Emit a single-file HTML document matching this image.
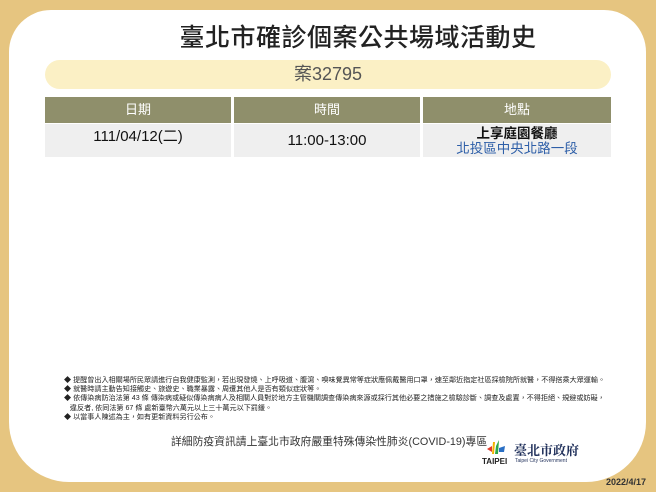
<!DOCTYPE html>
<html><head><meta charset="utf-8"><style>
*{margin:0;padding:0;box-sizing:border-box}
body{width:656px;height:492px;background:#e6c580;position:relative;overflow:hidden;font-family:"Liberation Sans","Noto Sans CJK TC",sans-serif}
.card{position:absolute;left:9px;top:10px;width:637px;height:472px;background:#fff;border-radius:42px 42px 60px 60px}
.title{position:absolute;left:0;width:656px;top:18px;text-align:center;font-size:25px;font-weight:500;color:#222;padding-left:60px;letter-spacing:0.5px}
.pill{position:absolute;left:45px;top:60px;width:566px;height:29px;border-radius:15px;background:#fbf0c5;text-align:center;font-size:18px;line-height:29px;color:#555}
.th{position:absolute;top:97px;height:26px;background:#8f8f6b;color:#fff;font-size:13px;text-align:center;line-height:26px}
.td{position:absolute;top:124px;height:33px;background:#efefef;color:#111;text-align:center}
.notes{position:absolute;left:64px;top:376px;font-size:7.1px;line-height:9.2px;color:#222;white-space:nowrap}
.foot{position:absolute;left:171px;top:433px;font-size:10.8px;color:#333}
.date{position:absolute;right:10px;top:477px;font-size:9px;font-weight:bold;color:#333}
</style></head><body>
<div class="card"></div>
<div class="title">臺北市確診個案公共場域活動史</div>
<div class="pill">案32795</div>
<div class="th" style="left:45px;width:186px">日期</div>
<div class="th" style="left:234px;width:186px">時間</div>
<div class="th" style="left:423px;width:188px">地點</div>
<div class="td" style="left:45px;width:186px;font-size:15px;line-height:26px">111/04/12(二)</div>
<div class="td" style="left:234px;width:186px;font-size:15px;line-height:34px">11:00-13:00</div>
<div class="td" style="left:423px;width:188px;font-size:13.5px;line-height:15px;padding-top:2px"><b>上享庭園餐廳</b><br><span style="color:#2e5fa8">北投區中央北路一段</span></div>
<div class="notes">◆ 提醒曾出入相關場所民眾請進行自我健康監測，若出現發燒、上呼吸道、腹瀉、嗅味覺異常等症狀應佩戴醫用口罩，速至鄰近指定社區採檢院所就醫，不得搭乘大眾運輸。<br>◆ 就醫時請主動告知接觸史、旅遊史、職業暴露、周遭其他人是否有類似症狀等。<br>◆ 依傳染病防治法第 43 條 傳染病或疑似傳染病病人及相關人員對於地方主管機關調查傳染病來源或採行其他必要之措施之檢驗診斷、調查及處置，不得拒絕、規避或妨礙，<br>&nbsp;&nbsp;&nbsp;違反者, 依同法第 67 條 處新臺幣六萬元以上三十萬元以下罰鍰。<br>◆ 以當事人陳述為主，如有更新資料另行公布。</div>
<div class="foot">詳細防疫資訊請上臺北市政府嚴重特殊傳染性肺炎(COVID-19)專區</div>
<svg style="position:absolute;left:483px;top:440px" width="30" height="22" viewBox="0 0 30 22">
<path d="M4 9 L9 6 L9 12 Z" fill="#e23b2a"/><path d="M10 2 L12 2 L11 14 L9 14Z" fill="#f2b300"/><path d="M13 6 L16 0 L15 14 L12 14Z" fill="#2ea84a"/><path d="M16 8 L22 6 L21 12 L16 12Z" fill="#2a6fc4"/>
</svg>
<div style="position:absolute;left:482px;top:457px;font-size:8px;font-weight:bold;color:#222">TAIPEI</div>
<div style="position:absolute;left:514px;top:440px;font-size:13px;font-weight:bold;color:#1f2f5a;font-family:'Noto Serif CJK SC',serif">臺北市政府</div>
<div style="position:absolute;left:515px;top:458px;font-size:5px;color:#1f2f5a">Taipei City Government</div>
<div class="date">2022/4/17</div>
</body></html>
